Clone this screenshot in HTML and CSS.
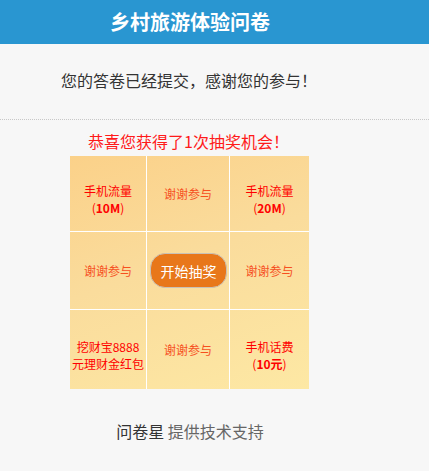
FILE: index.html
```html
<!DOCTYPE html>
<html lang="zh-CN">
<head>
<meta charset="utf-8">
<title>乡村旅游体验问卷</title>
<link rel="stylesheet" href="styles.css">
</head>
<body>
<div class="header"><div class="header-inner">乡村旅游体验问卷</div></div>
<div class="msg-wrap"><div class="msg">您的答卷已经提交，感谢您的参与！</div></div>
<div class="content">
  <div class="congrats">恭喜您获得了1次抽奖机会！</div>
  <div class="lottery">
    <div class="cell prize two"><span>手机流量<br>(<b>10M</b>)</span></div>
    <div class="cell thanks"><span>谢谢参与</span></div>
    <div class="cell prize two last-col"><span>手机流量<br>(<b>20M</b>)</span></div>
    <div class="cell thanks"><span>谢谢参与</span></div>
    <div class="cell"><button class="start">开始抽奖</button></div>
    <div class="cell thanks last-col"><span>谢谢参与</span></div>
    <div class="cell prize two last-row"><span>挖财宝8888<br>元理财金红包</span></div>
    <div class="cell thanks last-row"><span>谢谢参与</span></div>
    <div class="cell prize two last-col last-row"><span>手机话费<br>(<b>10元</b>)</span></div>
  </div>
  <div class="footer"><span class="brand">问卷星</span> 提供技术支持</div>
</div>
</body>
</html>
```
FILE: styles.css
```css
html, body {
  margin: 0;
  padding: 0;
}
body {
  background: #f7f7f7;
  font-family: "Noto Sans CJK SC", "Liberation Sans", sans-serif;
  color: #333;
}
.header {
  height: 44px;
  background: #2996d1;
}
.header-inner {
  width: 380px;
  text-align: center;
  line-height: 44px;
  font-size: 20px;
  font-weight: bold;
  color: #fff;
}
.msg-wrap {
  padding: 24px 0 27px;
  border-bottom: 1px dotted #c8c8c8;
}
.msg {
  width: 378px;
  text-align: center;
  font-size: 16px;
  line-height: 24px;
  color: #333;
}
.content {
  width: 380px;
}
.congrats {
  margin-top: 11px;
  text-align: center;
  font-size: 16px;
  line-height: 20px;
  color: #ff1a1a;
  padding-right: 3px;
}
.lottery {
  margin: 5px 0 0 70px;
  width: 239px;
  height: 233px;
  display: grid;
  grid-template-columns: 77px 83px 79px;
  grid-template-rows: 76px 78px 79px;
  background: linear-gradient(160deg, #fbd189 0%, #fadc9c 45%, #fde8a4 100%);
}
.cell {
  box-sizing: border-box;
  border-right: 1px solid #fff;
  border-bottom: 1px solid #fff;
  display: flex;
  align-items: center;
  justify-content: center;
  text-align: center;
  font-size: 12px;
  line-height: 17px;
}
.cell.last-col { border-right: none; }
.cell.last-row { border-bottom: none; }
.prize { color: #f00; }
.thanks { color: #f6501f; }
.two { padding-top: 10px; }
.start {
  width: 77px;
  height: 35px;
  box-sizing: border-box;
  border: 1px solid #c9c1b6;
  border-radius: 15px;
  background: #e8771a;
  color: #fff;
  font-family: "Noto Sans CJK SC", "Liberation Sans", sans-serif;
  font-size: 14px;
  padding: 0;
  margin-left: 1px;
}
.footer {
  margin-top: 30px;
  text-align: center;
  font-size: 16px;
  line-height: 24px;
  color: #666;
}
.brand { color: #333; }
```
